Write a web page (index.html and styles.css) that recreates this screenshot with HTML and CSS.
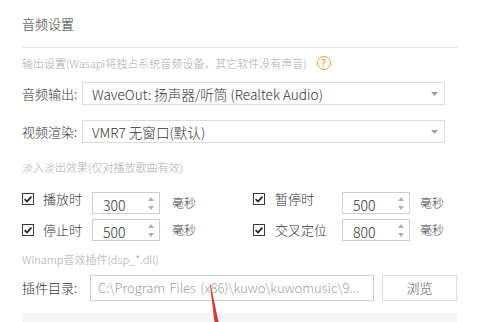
FILE: index.html
```html
<!DOCTYPE html>
<html lang="zh-CN">
<head>
<meta charset="utf-8">
<title>音频设置</title>
<link rel="stylesheet" href="styles.css">
</head>
<body>
<div class="page">
  <div class="title">音频设置</div>

  <div class="hint hint-out">输出设置(Wasapi将独占系统音频设备，其它软件没有声音)<span class="help">?</span></div>

  <div class="field field-first">
    <span class="label">音频输出:</span>
    <div class="select"><span class="select-text">WaveOut: 扬声器/听筒 (Realtek Audio)</span><svg class="caret" width="7" height="4" viewBox="0 0 7 4"><path d="M0 0H7L3.5 4Z" fill="#a0a0a0"/></svg></div>
  </div>
  <div class="field field-second">
    <span class="label">视频渲染:</span>
    <div class="select"><span class="select-text">VMR7 无窗口(默认)</span><svg class="caret" width="7" height="4" viewBox="0 0 7 4"><path d="M0 0H7L3.5 4Z" fill="#a0a0a0"/></svg></div>
  </div>

  <div class="hint hint-fade">淡入淡出效果(仅对播放歌曲有效)</div>

  <div class="fade-grid">
    <span class="check top"><svg width="12" height="12" viewBox="0 0 12 12"><rect x="0.5" y="0.5" width="11" height="11" fill="#fff" stroke="#3a3a3a"/><path d="M2.6 6.2L5 8.5L9.4 3.6" fill="none" stroke="#222" stroke-width="1.7"/></svg></span>
    <span class="clabel top">播放时</span>
    <div class="spin"><span class="spin-val">300</span><span class="arrows"><svg width="6" height="4" viewBox="0 0 6 4"><path d="M0 4L3 0L6 4Z" fill="#b0b0b0"/></svg><svg width="6" height="4" viewBox="0 0 6 4"><path d="M0 0H6L3 4Z" fill="#b0b0b0"/></svg></span></div>
    <span class="unit">毫秒</span>
    <span class="check top"><svg width="12" height="12" viewBox="0 0 12 12"><rect x="0.5" y="0.5" width="11" height="11" fill="#fff" stroke="#3a3a3a"/><path d="M2.6 6.2L5 8.5L9.4 3.6" fill="none" stroke="#222" stroke-width="1.7"/></svg></span>
    <span class="clabel top">暂停时</span>
    <div class="spin"><span class="spin-val">500</span><span class="arrows"><svg width="6" height="4" viewBox="0 0 6 4"><path d="M0 4L3 0L6 4Z" fill="#b0b0b0"/></svg><svg width="6" height="4" viewBox="0 0 6 4"><path d="M0 0H6L3 4Z" fill="#b0b0b0"/></svg></span></div>
    <span class="unit">毫秒</span>

    <span class="check"><svg width="12" height="12" viewBox="0 0 12 12"><rect x="0.5" y="0.5" width="11" height="11" fill="#fff" stroke="#3a3a3a"/><path d="M2.6 6.2L5 8.5L9.4 3.6" fill="none" stroke="#222" stroke-width="1.7"/></svg></span>
    <span class="clabel">停止时</span>
    <div class="spin"><span class="spin-val">500</span><span class="arrows"><svg width="6" height="4" viewBox="0 0 6 4"><path d="M0 4L3 0L6 4Z" fill="#b0b0b0"/></svg><svg width="6" height="4" viewBox="0 0 6 4"><path d="M0 0H6L3 4Z" fill="#b0b0b0"/></svg></span></div>
    <span class="unit">毫秒</span>
    <span class="check"><svg width="12" height="12" viewBox="0 0 12 12"><rect x="0.5" y="0.5" width="11" height="11" fill="#fff" stroke="#3a3a3a"/><path d="M2.6 6.2L5 8.5L9.4 3.6" fill="none" stroke="#222" stroke-width="1.7"/></svg></span>
    <span class="clabel">交叉定位</span>
    <div class="spin"><span class="spin-val">800</span><span class="arrows"><svg width="6" height="4" viewBox="0 0 6 4"><path d="M0 4L3 0L6 4Z" fill="#b0b0b0"/></svg><svg width="6" height="4" viewBox="0 0 6 4"><path d="M0 0H6L3 4Z" fill="#b0b0b0"/></svg></span></div>
    <span class="unit">毫秒</span>
  </div>

  <div class="hint hint-winamp">Winamp音效插件(dsp_*.dll)</div>

  <div class="plugin-row">
    <span class="plabel">插件目录:</span>
    <div class="path">C:\Program Files (x86)\kuwo\kuwomusic\9...</div>
    <div class="btn">浏览</div>
  </div>

  <div class="bottom-bar"></div>
</div>
<svg class="annot" width="20" height="40" viewBox="0 0 20 40"><path d="M5 0L5.8 0L13.5 37L9.5 37Z" fill="#d63a35"/></svg>
</body>
</html>
```

FILE: styles.css
```css
html, body {
  margin: 0;
  padding: 0;
  background: #fff;
}
body {
  width: 500px;
  height: 322px;
  overflow: hidden;
  position: relative;
  font-family: "Noto Sans CJK SC", "Open Sans", sans-serif;
  font-weight: 300;
  color: #333;
}
.page {
  padding-left: 22px;
  width: 436px;
}
.title {
  font-size: 13px;
  line-height: 20px;
  padding-top: 14px;
  padding-bottom: 13px;
  border-bottom: 1px solid #e6e6e6;
  color: #333;
}
.hint {
  font-size: 11px;
  line-height: 16px;
  color: #ababab;
  display: flex;
  align-items: center;
}
.hint-out { margin-top: 7px; }
.help {
  margin-left: 10px;
  width: 12px;
  height: 12px;
  border: 1.5px solid #e6a045;
  border-radius: 50%;
  color: #e6a045;
  font-size: 10px;
  line-height: 12px;
  text-align: center;
  font-family: "Open Sans", sans-serif;
  font-weight: 600;
}
.field {
  display: flex;
  align-items: center;
}
.field-first { margin-top: 11px; }
.field-second { margin-top: 15px; }
.label {
  width: 60px;
  font-size: 13px;
  line-height: 18px;
  color: #333;
}
.select {
  box-sizing: border-box;
  width: 363px;
  height: 23px;
  border: 1px solid #dcdcdc;
  display: flex;
  align-items: center;
  padding-left: 9px;
  padding-right: 6px;
}
.select-text {
  flex: 1;
  font-size: 13.6px;
  line-height: 20px;
  color: #333;
}
.caret { display: block; }
.hint-fade { margin-top: 16px; }
.fade-grid {
  margin-top: 17px;
  display: grid;
  grid-template-columns: 21px 49px 80px 81px 22px 67px 78px auto;
  grid-auto-rows: 22px;
  row-gap: 5px;
  align-items: center;
}
.check { display: flex; }
.check svg { display: block; }
.check.top { align-self: start; margin-top: 1px; }
.clabel {
  font-size: 13px;
  line-height: 14px;
  color: #333;
}
.clabel.top { align-self: start; }
.spin {
  box-sizing: border-box;
  width: 68px;
  height: 22px;
  border: 1px solid #c9d0d8;
  display: flex;
  align-items: center;
  padding-left: 10px;
  padding-right: 5px;
}
.spin-val {
  flex: 1;
  font-size: 14px;
  line-height: 18px;
  color: #333;
  padding-top: 3px;
}
.arrows {
  display: flex;
  flex-direction: column;
  gap: 5px;
}
.arrows svg { display: block; }
.unit {
  font-size: 12px;
  line-height: 16px;
  color: #444;
}
.hint-winamp { margin-top: 10px; }
.plugin-row {
  margin-top: 8px;
  display: flex;
  align-items: center;
}
.plabel {
  width: 68px;
  font-size: 13px;
  line-height: 18px;
  color: #333;
}
.path {
  box-sizing: border-box;
  width: 284px;
  height: 26px;
  border: 1px solid #c9d0d8;
  padding-left: 7px;
  font-size: 13px;
  line-height: 24px;
  color: #a0a0a0;
  white-space: nowrap;
  overflow: hidden;
  word-spacing: 1.5px;
}
.btn {
  box-sizing: border-box;
  margin-left: 8px;
  width: 75px;
  height: 26px;
  border: 1px solid #dcdcdc;
  font-size: 13px;
  line-height: 24px;
  text-align: center;
  color: #555;
}
.bottom-bar {
  margin-top: 12px;
  width: 435px;
  height: 20px;
  background: #f6f6f6;
}
.annot {
  position: absolute;
  left: 205px;
  top: 285px;
}
```
